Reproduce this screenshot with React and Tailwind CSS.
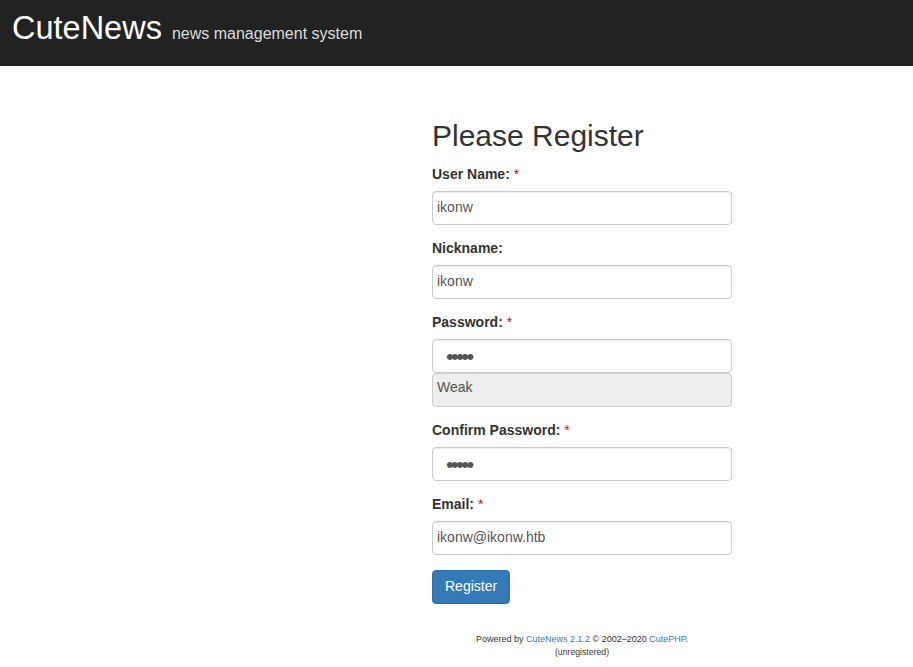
const Field = ({ label, required, value, type = "text", children }) => {
  return (
    <div className="mb-3">
      <label className="block h-5 leading-5 mb-2 pt-[1px] text-sm font-bold text-[#333]">
        {label}
        {required && <span className="font-normal text-[#e00]"> *</span>}
      </label>
      <input
        type={type}
        defaultValue={value}
        readOnly
        className={
          "block w-full h-[34px] bg-white border border-[#ccc] rounded-[4px] text-[#555] shadow-[inset_0_1px_1px_rgba(0,0,0,0.075)] outline-none " +
          (type === "password"
            ? "pl-[13px] text-[22px] tracking-[-2.6px] pt-[1px]"
            : "pl-[4px] text-sm pb-[2px]")
        }
      />
      {children}
    </div>
  );
};

export default function App() {
  return (
    <div className="min-h-[667px] bg-white font-['Liberation_Sans',Arial,sans-serif]">
      {/* Header bar */}
      <div className="h-[66px] bg-[#222] flex items-baseline px-3 pt-[9px]">
        <span className="text-[32.5px] leading-[38px] text-white">CuteNews</span>
        <span className="ml-[10px] text-base text-[#ddd]">news management system</span>
      </div>

      {/* Register form */}
      <div className="pl-[432px]">
        <div className="w-[300px]">
          <h2 className="mt-[53px] mb-[11px] text-[30px] leading-[33px] text-[#333]">
            Please Register
          </h2>
          <Field label="User Name:" required value="ikonw" />
          <Field label="Nickname:" value="ikonw" />
          <Field label="Password:" required value="12345" type="password">
            <div className="h-[34px] bg-[#eee] border border-[#ccc] rounded-[4px] pl-[4px] text-sm leading-[27px] text-[#555]">
              Weak
            </div>
          </Field>
          <Field label="Confirm Password:" required value="12345" type="password" />
          <Field label="Email:" required value="ikonw@ikonw.htb" />
          <button className="mt-[3px] h-[34px] px-3 pb-[2px] bg-[#337ab7] border border-[#2e6da4] rounded-[4px] text-sm text-white">
            Register
          </button>

          {/* Footer */}
          <div className="mt-[29px] text-center text-[#333]">
            <div className="text-[9px] leading-[13px]">
              Powered by <span className="text-[#337ab7]">CuteNews 2.1.2</span> © 2002–2020{" "}
              <span className="text-[#337ab7]">CutePHP</span>.
            </div>
            <div className="text-[8.7px] leading-[13px]">(unregistered)</div>
          </div>
        </div>
      </div>
    </div>
  );
}
